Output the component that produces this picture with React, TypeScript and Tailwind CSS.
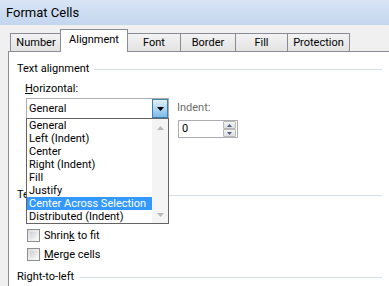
import React from "react";

const tabs = [
  { label: "Number", w: "w-[51px]" },
  { label: "Alignment", w: "w-[68px]", active: true },
  { label: "Font", w: "w-[53px]" },
  { label: "Border", w: "w-[55px]" },
  { label: "Fill", w: "w-[52px]" },
  { label: "Protection", w: "w-[63px]" },
];

const items = [
  "General",
  "Left (Indent)",
  "Center",
  "Right (Indent)",
  "Fill",
  "Justify",
  "Center Across Selection",
  "Distributed (Indent)",
];

const SectionHeader = ({ children }: { children: React.ReactNode }) => (
  <div className="flex items-center h-[14px] gap-[5px] pr-[7px]">
    <span className="leading-[14px]">{children}</span>
    <div className="flex-1 h-px bg-[#d5dfe5]" />
  </div>
);

const Checkbox = ({ label }: { label: React.ReactNode }) => (
  <div className="flex items-center h-[19px] pl-[10px] gap-[4px]">
    <div className="w-[13px] h-[13px] border border-[#8e8f8f] bg-gradient-to-br from-[#dcdcdc] to-[#fbfbfb] p-[2px]">
      <div className="w-full h-full bg-gradient-to-br from-[#cbcfd5] to-[#f6f6f6]" />
    </div>
    <span className="leading-[14px]">{label}</span>
  </div>
);

export default function App() {
  return (
    <div className="w-[389px] h-[286px] overflow-hidden bg-[#f0f0f0] text-[11px] text-black font-['Roboto',sans-serif] flex flex-col">
      {/* title bar */}
      <div className="h-[25px] shrink-0 flex items-center pl-[6px] bg-gradient-to-b from-[#d8e5f5] to-[#c3d6ee]">
        <span className="leading-[14px] text-[13px]">Format Cells</span>
      </div>

      {/* tabs */}
      <div className="h-[26px] shrink-0 flex items-end pl-[10px]">
        {tabs.map((t) =>
          t.active ? (
            <div
              key={t.label}
              className={`${t.w} h-[23px] -mb-px relative z-10 bg-white border border-b-0 border-[#898c95] -mx-px flex items-center justify-center`}
            >
              <span className="leading-[14px] -mt-[2px]">{t.label}</span>
            </div>
          ) : (
            <div
              key={t.label}
              className={`${t.w} h-[18px] bg-gradient-to-b from-[#f3f3f3] to-[#e3e3e3] border border-b-0 border-r-0 last:border-r border-[#898c95] flex items-center justify-center`}
            >
              <span className="leading-[14px]">{t.label}</span>
            </div>
          )
        )}
      </div>

      {/* panel */}
      <div className="ml-[8px] flex-1 bg-white border-l border-t border-[#898c95] relative pl-[8px] pt-[10px]">
        <SectionHeader>Text alignment</SectionHeader>

        <div className="flex mt-[6px] pl-[8px]">
          {/* left column */}
          <div className="w-[144px]">
            <div className="leading-[14px]">
              <span className="underline">H</span>orizontal:
            </div>
            <div className="mt-[2px] ml-[1px] w-[143px] h-[21px] border border-[#abadb3] flex items-center">
              <span className="pl-[2px] flex-1 leading-[14px]">General</span>
              <div className="w-[16px] h-[19px] border border-[#3c7fb1] bg-gradient-to-b from-[#e3f1fb] to-[#7dbbe7] flex items-center justify-center">
                <svg width="7" height="4" viewBox="0 0 7 4">
                  <path d="M0 0h7L3.5 4z" fill="#000" />
                </svg>
              </div>
            </div>
          </div>

          {/* right column */}
          <div className="ml-[8px] pt-[19px]">
            <div className="leading-[14px] text-[#6d6d6d]">Indent:</div>
            <div className="mt-[5px] ml-[1px] w-[60px] h-[18px] border border-[#abadb3] flex items-center">
              <span className="pl-[3px] flex-1 leading-[14px]">0</span>
              <div className="w-[13px] h-[16px] mr-px flex flex-col">
                <div className="flex-1 border border-[#b8b8b8] rounded-[1px] bg-gradient-to-b from-[#f4f4f4] to-[#dedede] flex items-center justify-center">
                  <svg width="5" height="3" viewBox="0 0 5 3">
                    <path d="M0 3h5L2.5 0z" fill="#4d6185" />
                  </svg>
                </div>
                <div className="flex-1 border border-[#b8b8b8] rounded-[1px] bg-gradient-to-b from-[#f4f4f4] to-[#dedede] flex items-center justify-center">
                  <svg width="5" height="3" viewBox="0 0 5 3">
                    <path d="M0 0h5L2.5 3z" fill="#4d6185" />
                  </svg>
                </div>
              </div>
            </div>
          </div>
        </div>

        <div className="mt-[50px]">
          <SectionHeader>Text control</SectionHeader>
        </div>
        <div className="mt-[24px]">
          <Checkbox label={<>Shrin<span className="underline">k</span> to fit</>} />
          <Checkbox label={<><span className="underline">M</span>erge cells</>} />
        </div>

        <div className="mt-[6px]">
          <SectionHeader>Right-to-left</SectionHeader>
        </div>

        {/* open dropdown list */}
        <div className="absolute left-[17px] top-[66px] w-[143px] h-[106px] border border-[#646464] bg-white flex">
          <div className="flex-1 flex flex-col">
            {items.map((it, i) => (
              <div
                key={it}
                className={`h-[13px] pl-[2px] flex items-center ${
                  i === 6 ? "bg-[#3399ff] text-white" : ""
                }`}
              >
                <span className="leading-[13px] whitespace-nowrap">{it}</span>
              </div>
            ))}
          </div>
          <div className="w-[16px] bg-[#f4f4f4] flex flex-col justify-between">
            <div className="h-[17px] flex items-center justify-center">
              <svg width="7" height="4" viewBox="0 0 7 4">
                <path d="M0 4h7L3.5 0z" fill="#b9b9b9" />
              </svg>
            </div>
            <div className="h-[17px] flex items-center justify-center">
              <svg width="7" height="4" viewBox="0 0 7 4">
                <path d="M0 0h7L3.5 4z" fill="#b9b9b9" />
              </svg>
            </div>
          </div>
        </div>
      </div>
    </div>
  );
}
